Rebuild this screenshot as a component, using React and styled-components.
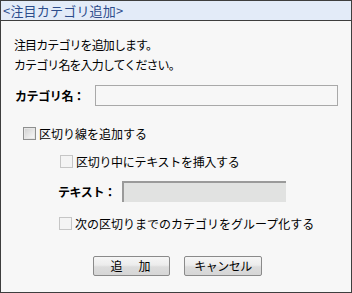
import React from "react";
import styled, { createGlobalStyle } from "styled-components";

const Global = createGlobalStyle`
  html, body { margin: 0; padding: 0; background: #f7f7f7; }
  body { font-family: "Noto Sans CJK JP", "Liberation Sans", sans-serif; }
`;

const Frame = styled.div`
  width: 352px;
  height: 293px;
  box-sizing: border-box;
  border: 1px solid #3e3e3e;
  background: #f7f7f7;
  display: flex;
  flex-direction: column;
  font-size: 12px;
  color: #000;
`;

const TitleBar = styled.div`
  height: 19px;
  background: #e3ebf8;
  border-bottom: 1px solid #3e3e3e;
  color: #2c4c8c;
  font-size: 13px;
  line-height: 19px;
  padding-left: 2px;
  letter-spacing: 0.2px;
`;

const Body = styled.div`
  display: flex;
  flex-direction: column;
  padding: 14px 13px 0 13px;
`;

const Intro = styled.div`
  line-height: 20px;
  letter-spacing: -0.9px;
`;

const FieldRow = styled.div`
  display: flex;
  align-items: center;
  margin-top: ${(p) => p.$mt}px;
  padding-left: ${(p) => p.$indent || 0}px;
`;

const Label = styled.label`
  width: ${(p) => p.$w}px;
  font-weight: bold;
  letter-spacing: -0.4px;
  flex-shrink: 0;
`;

const TextInput = styled.input`
  box-sizing: border-box;
  height: 21px;
  width: ${(p) => (p.$w ? `${p.$w}px` : "auto")};
  flex: ${(p) => (p.$w ? "0 0 auto" : "1")};
  margin: 0;
  padding: 0 3px;
  border: 1px solid #a9a9a9;
  background: #f7f7f7;
  font: inherit;
  &:disabled {
    background: #e1e2e1;
    border: none;
    border-top: 2px solid #9a9a9a;
    border-left: 2px solid #9a9a9a;
  }
`;

const CheckRow = styled.label`
  display: flex;
  align-items: center;
  height: 20px;
  margin-top: ${(p) => p.$mt}px;
  padding-left: ${(p) => p.$indent}px;
  gap: 3px;
  letter-spacing: ${(p) => p.$ls}px;
`;

const Box = styled.input.attrs({ type: "checkbox" })`
  appearance: none;
  -webkit-appearance: none;
  margin: 0;
  width: 13px;
  height: 13px;
  box-sizing: border-box;
  border: 1px solid #8e8f8f;
  background: linear-gradient(135deg, #cfcfcf 0%, #f0f0f0 75%, #fafafa 100%);
  box-shadow: inset 0 0 0 1px #e6e6e6;
  flex-shrink: 0;
  &:disabled {
    border-color: #c6c6c6;
    background: #f4f4f4;
    box-shadow: none;
  }
`;

const ButtonRow = styled.div`
  display: flex;
  gap: 14px;
  margin-top: 23px;
  padding-left: 79px;
`;

const Button = styled.button`
  width: ${(p) => p.$w}px;
  height: 20px;
  margin: 0;
  padding: 0;
  box-sizing: border-box;
  border: 1px solid #8a8a8a;
  border-radius: 2px;
  background: linear-gradient(#f6f6f6 0%, #ececec 45%, #dcdcdc 55%, #d6d6d6 100%);
  font-family: inherit;
  font-size: 12px;
  line-height: 18px;
  color: #000;
  letter-spacing: ${(p) => p.$ls}px;
`;

export default function App() {
  return (
    <>
      <Global />
      <Frame>
        <TitleBar>&lt;注目カテゴリ追加&gt;</TitleBar>
        <Body>
          <Intro>
            注目カテゴリを追加します。
            <br />
            カテゴリ名を入力してください。
          </Intro>
          <FieldRow $mt={10} $indent={1}>
            <Label $w={80}>カテゴリ名：</Label>
            <TextInput type="text" />
          </FieldRow>
          <CheckRow $mt={17} $indent={9} $ls={0}>
            <Box />
            区切り線を追加する
          </CheckRow>
          <CheckRow $mt={8} $indent={46} $ls={-0.3}>
            <Box disabled />
            区切り中にテキストを挿入する
          </CheckRow>
          <FieldRow $mt={10} $indent={44}>
            <Label $w={64}>テキスト：</Label>
            <TextInput type="text" disabled $w={164} />
          </FieldRow>
          <CheckRow $mt={11} $indent={45} $ls={0}>
            <Box disabled />
            次の区切りまでのカテゴリをグループ化する
          </CheckRow>
          <ButtonRow>
            <Button $w={77} $ls={2}>追　加</Button>
            <Button $w={78} $ls={-0.5}>キャンセル</Button>
          </ButtonRow>
        </Body>
      </Frame>
    </>
  );
}
